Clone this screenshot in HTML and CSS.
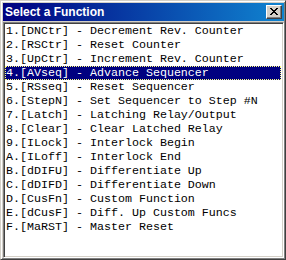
FILE: index.html
```html
<!DOCTYPE html>
<html>
<head>
<meta charset="utf-8">
<link rel="stylesheet" href="styles.css">
</head>
<body>
<div class="window">
  <div class="titlebar">
    <span class="title">Select a Function</span>
    <button class="close" aria-label="Close">
      <svg width="8" height="7" viewBox="0 0 8 7"><path d="M0 0h2v1h1v1h2v-1h1v-1h2v1h-1v1h-1v1h-1v1h1v1h1v1h1v1h-2v-1h-1v-1h-2v1h-1v1h-2v-1h1v-1h1v-1h1v-1h-1v-1h-1v-1h-1z" fill="#000"/></svg>
    </button>
  </div>
  <div class="listbox">
    <div class="item">1.[DNCtr] - Decrement Rev. Counter</div>
    <div class="item">2.[RSCtr] - Reset Counter</div>
    <div class="item">3.[UpCtr] - Increment Rev. Counter</div>
    <div class="item selected">4.[AVseq] - Advance Sequencer</div>
    <div class="item">5.[RSseq] - Reset Sequencer</div>
    <div class="item">6.[StepN] - Set Sequencer to Step #N</div>
    <div class="item">7.[Latch] - Latching Relay/Output</div>
    <div class="item">8.[Clear] - Clear Latched Relay</div>
    <div class="item">9.[ILock] - Interlock Begin</div>
    <div class="item">A.[ILoff] - Interlock End</div>
    <div class="item">B.[dDIFU] - Differentiate Up</div>
    <div class="item">C.[dDIFD] - Differentiate Down</div>
    <div class="item">D.[CusFn] - Custom Function</div>
    <div class="item">E.[dCusF] - Diff. Up Custom Funcs</div>
    <div class="item">F.[MaRST] - Master Reset</div>
  </div>
</div>
</body>
</html>
```
FILE: styles.css
```css
html, body {
  margin: 0;
  padding: 0;
  background: #d4d0c8;
}
.window {
  box-sizing: border-box;
  width: 286px;
  height: 260px;
  background: #d4d0c8;
  border: 1px solid;
  border-color: #d4d0c8 #404040 #404040 #d4d0c8;
  box-shadow: inset 1px 1px 0 #ffffff, inset -1px -1px 0 #808080;
  padding: 2px 1px 1px 2px;
  display: flex;
  flex-direction: column;
}
.titlebar {
  height: 18px;
  flex: none;
  background: linear-gradient(to right, #000080, #1084d0);
  display: flex;
  align-items: center;
  justify-content: space-between;
  padding: 0 2px 0 2px;
}
.title {
  color: #ffffff;
  font-family: "Liberation Sans", Arial, sans-serif;
  font-weight: bold;
  font-size: 12px;
  line-height: 18px;
}
.close {
  box-sizing: border-box;
  width: 16px;
  height: 14px;
  padding: 0;
  margin: 0;
  background: #d4d0c8;
  border: 1px solid;
  border-color: #ffffff #404040 #404040 #ffffff;
  box-shadow: inset -1px -1px 0 #808080;
  display: flex;
  align-items: center;
  justify-content: center;
}
.close svg {
  display: block;
  margin: 0 1px 1px 0;
}
.listbox {
  flex: 1;
  margin-top: 1px;
  background: #ffffff;
  border: 1px solid;
  border-color: #808080 #ffffff #ffffff #808080;
  box-shadow: inset 1px 1px 0 #404040, inset -1px -1px 0 #d4d0c8;
  padding: 1px 2px 1px 1px;
}
.item {
  height: 14px;
  line-height: 14px;
  font-family: "Liberation Mono", "Courier New", monospace;
  font-size: 11.67px;
  color: #000000;
  white-space: pre;
  padding-left: 1px;
  box-sizing: border-box;
}
.item.selected {
  background: #000080;
  color: #ffffff;
  outline: 1px dotted #ffff80;
  outline-offset: -1px;
}
```
